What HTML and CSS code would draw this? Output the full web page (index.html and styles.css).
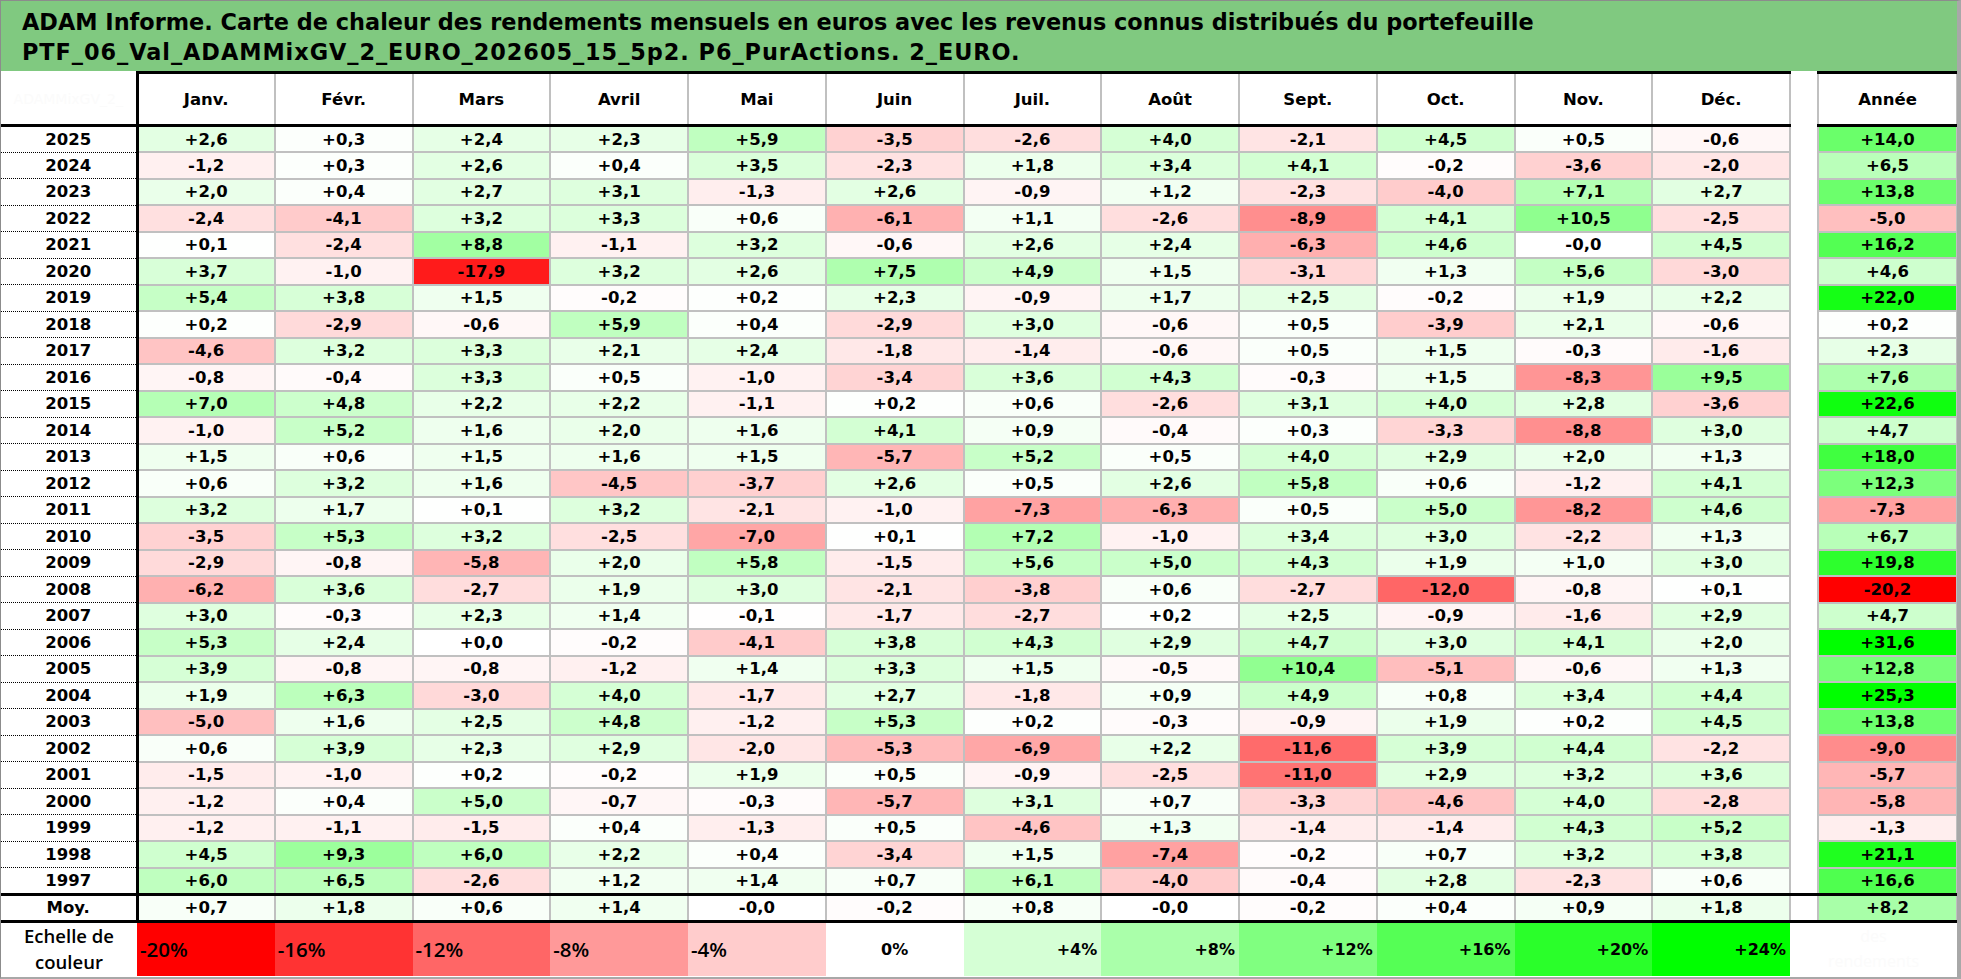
FILE: index.html
```html
<!DOCTYPE html>
<html lang="fr">
<head>
<meta charset="utf-8">
<title>ADAM Informe - Carte de chaleur</title>
<link rel="stylesheet" href="styles.css">
</head>
<body>
<div class="sheet">
  <div class="title">
    <p>ADAM Informe. Carte de chaleur des rendements mensuels en euros avec les revenus connus distribués du portefeuille</p>
    <p class="sub">PTF_06_Val_ADAMMixGV_2_EURO_202605_15_5p2. P6_PurActions. 2_EURO.</p>
  </div>
  <table class="heat">
    <colgroup>
      <col class="c-year">
      <col class="c-m"><col class="c-m"><col class="c-m"><col class="c-m"><col class="c-m"><col class="c-m">
      <col class="c-m"><col class="c-m"><col class="c-m"><col class="c-m"><col class="c-m"><col class="c-m">
      <col class="c-gap">
      <col class="c-an">
    </colgroup>
    <thead>
      <tr class="head">
        <th class="corner"><span class="ghost">ADAMMixGV_2_</span></th>
        <th class="m">Janv.</th><th class="m">Févr.</th><th class="m">Mars</th><th class="m">Avril</th>
        <th class="m">Mai</th><th class="m">Juin</th><th class="m">Juil.</th><th class="m">Août</th>
        <th class="m">Sept.</th><th class="m">Oct.</th><th class="m">Nov.</th><th class="m dec">Déc.</th>
        <th class="gap"></th>
        <th class="m an">Année</th>
      </tr>
    </thead>
    <tbody>
      <tr class="row"><th class="y">2025</th><td class="v">+2,6</td><td class="v">+0,3</td><td class="v">+2,4</td><td class="v">+2,3</td><td class="v">+5,9</td><td class="v">-3,5</td><td class="v">-2,6</td><td class="v">+4,0</td><td class="v">-2,1</td><td class="v">+4,5</td><td class="v">+0,5</td><td class="v dec">-0,6</td><td class="gap"></td><td class="v an">+14,0</td></tr>
      <tr class="row"><th class="y">2024</th><td class="v">-1,2</td><td class="v">+0,3</td><td class="v">+2,6</td><td class="v">+0,4</td><td class="v">+3,5</td><td class="v">-2,3</td><td class="v">+1,8</td><td class="v">+3,4</td><td class="v">+4,1</td><td class="v">-0,2</td><td class="v">-3,6</td><td class="v dec">-2,0</td><td class="gap"></td><td class="v an">+6,5</td></tr>
      <tr class="row"><th class="y">2023</th><td class="v">+2,0</td><td class="v">+0,4</td><td class="v">+2,7</td><td class="v">+3,1</td><td class="v">-1,3</td><td class="v">+2,6</td><td class="v">-0,9</td><td class="v">+1,2</td><td class="v">-2,3</td><td class="v">-4,0</td><td class="v">+7,1</td><td class="v dec">+2,7</td><td class="gap"></td><td class="v an">+13,8</td></tr>
      <tr class="row"><th class="y">2022</th><td class="v">-2,4</td><td class="v">-4,1</td><td class="v">+3,2</td><td class="v">+3,3</td><td class="v">+0,6</td><td class="v">-6,1</td><td class="v">+1,1</td><td class="v">-2,6</td><td class="v">-8,9</td><td class="v">+4,1</td><td class="v">+10,5</td><td class="v dec">-2,5</td><td class="gap"></td><td class="v an">-5,0</td></tr>
      <tr class="row"><th class="y">2021</th><td class="v">+0,1</td><td class="v">-2,4</td><td class="v">+8,8</td><td class="v">-1,1</td><td class="v">+3,2</td><td class="v">-0,6</td><td class="v">+2,6</td><td class="v">+2,4</td><td class="v">-6,3</td><td class="v">+4,6</td><td class="v">-0,0</td><td class="v dec">+4,5</td><td class="gap"></td><td class="v an">+16,2</td></tr>
      <tr class="row"><th class="y">2020</th><td class="v">+3,7</td><td class="v">-1,0</td><td class="v">-17,9</td><td class="v">+3,2</td><td class="v">+2,6</td><td class="v">+7,5</td><td class="v">+4,9</td><td class="v">+1,5</td><td class="v">-3,1</td><td class="v">+1,3</td><td class="v">+5,6</td><td class="v dec">-3,0</td><td class="gap"></td><td class="v an">+4,6</td></tr>
      <tr class="row"><th class="y">2019</th><td class="v">+5,4</td><td class="v">+3,8</td><td class="v">+1,5</td><td class="v">-0,2</td><td class="v">+0,2</td><td class="v">+2,3</td><td class="v">-0,9</td><td class="v">+1,7</td><td class="v">+2,5</td><td class="v">-0,2</td><td class="v">+1,9</td><td class="v dec">+2,2</td><td class="gap"></td><td class="v an">+22,0</td></tr>
      <tr class="row"><th class="y">2018</th><td class="v">+0,2</td><td class="v">-2,9</td><td class="v">-0,6</td><td class="v">+5,9</td><td class="v">+0,4</td><td class="v">-2,9</td><td class="v">+3,0</td><td class="v">-0,6</td><td class="v">+0,5</td><td class="v">-3,9</td><td class="v">+2,1</td><td class="v dec">-0,6</td><td class="gap"></td><td class="v an">+0,2</td></tr>
      <tr class="row"><th class="y">2017</th><td class="v">-4,6</td><td class="v">+3,2</td><td class="v">+3,3</td><td class="v">+2,1</td><td class="v">+2,4</td><td class="v">-1,8</td><td class="v">-1,4</td><td class="v">-0,6</td><td class="v">+0,5</td><td class="v">+1,5</td><td class="v">-0,3</td><td class="v dec">-1,6</td><td class="gap"></td><td class="v an">+2,3</td></tr>
      <tr class="row"><th class="y">2016</th><td class="v">-0,8</td><td class="v">-0,4</td><td class="v">+3,3</td><td class="v">+0,5</td><td class="v">-1,0</td><td class="v">-3,4</td><td class="v">+3,6</td><td class="v">+4,3</td><td class="v">-0,3</td><td class="v">+1,5</td><td class="v">-8,3</td><td class="v dec">+9,5</td><td class="gap"></td><td class="v an">+7,6</td></tr>
      <tr class="row"><th class="y">2015</th><td class="v">+7,0</td><td class="v">+4,8</td><td class="v">+2,2</td><td class="v">+2,2</td><td class="v">-1,1</td><td class="v">+0,2</td><td class="v">+0,6</td><td class="v">-2,6</td><td class="v">+3,1</td><td class="v">+4,0</td><td class="v">+2,8</td><td class="v dec">-3,6</td><td class="gap"></td><td class="v an">+22,6</td></tr>
      <tr class="row"><th class="y">2014</th><td class="v">-1,0</td><td class="v">+5,2</td><td class="v">+1,6</td><td class="v">+2,0</td><td class="v">+1,6</td><td class="v">+4,1</td><td class="v">+0,9</td><td class="v">-0,4</td><td class="v">+0,3</td><td class="v">-3,3</td><td class="v">-8,8</td><td class="v dec">+3,0</td><td class="gap"></td><td class="v an">+4,7</td></tr>
      <tr class="row"><th class="y">2013</th><td class="v">+1,5</td><td class="v">+0,6</td><td class="v">+1,5</td><td class="v">+1,6</td><td class="v">+1,5</td><td class="v">-5,7</td><td class="v">+5,2</td><td class="v">+0,5</td><td class="v">+4,0</td><td class="v">+2,9</td><td class="v">+2,0</td><td class="v dec">+1,3</td><td class="gap"></td><td class="v an">+18,0</td></tr>
      <tr class="row"><th class="y">2012</th><td class="v">+0,6</td><td class="v">+3,2</td><td class="v">+1,6</td><td class="v">-4,5</td><td class="v">-3,7</td><td class="v">+2,6</td><td class="v">+0,5</td><td class="v">+2,6</td><td class="v">+5,8</td><td class="v">+0,6</td><td class="v">-1,2</td><td class="v dec">+4,1</td><td class="gap"></td><td class="v an">+12,3</td></tr>
      <tr class="row"><th class="y">2011</th><td class="v">+3,2</td><td class="v">+1,7</td><td class="v">+0,1</td><td class="v">+3,2</td><td class="v">-2,1</td><td class="v">-1,0</td><td class="v">-7,3</td><td class="v">-6,3</td><td class="v">+0,5</td><td class="v">+5,0</td><td class="v">-8,2</td><td class="v dec">+4,6</td><td class="gap"></td><td class="v an">-7,3</td></tr>
      <tr class="row"><th class="y">2010</th><td class="v">-3,5</td><td class="v">+5,3</td><td class="v">+3,2</td><td class="v">-2,5</td><td class="v">-7,0</td><td class="v">+0,1</td><td class="v">+7,2</td><td class="v">-1,0</td><td class="v">+3,4</td><td class="v">+3,0</td><td class="v">-2,2</td><td class="v dec">+1,3</td><td class="gap"></td><td class="v an">+6,7</td></tr>
      <tr class="row"><th class="y">2009</th><td class="v">-2,9</td><td class="v">-0,8</td><td class="v">-5,8</td><td class="v">+2,0</td><td class="v">+5,8</td><td class="v">-1,5</td><td class="v">+5,6</td><td class="v">+5,0</td><td class="v">+4,3</td><td class="v">+1,9</td><td class="v">+1,0</td><td class="v dec">+3,0</td><td class="gap"></td><td class="v an">+19,8</td></tr>
      <tr class="row"><th class="y">2008</th><td class="v">-6,2</td><td class="v">+3,6</td><td class="v">-2,7</td><td class="v">+1,9</td><td class="v">+3,0</td><td class="v">-2,1</td><td class="v">-3,8</td><td class="v">+0,6</td><td class="v">-2,7</td><td class="v">-12,0</td><td class="v">-0,8</td><td class="v dec">+0,1</td><td class="gap"></td><td class="v an">-20,2</td></tr>
      <tr class="row"><th class="y">2007</th><td class="v">+3,0</td><td class="v">-0,3</td><td class="v">+2,3</td><td class="v">+1,4</td><td class="v">-0,1</td><td class="v">-1,7</td><td class="v">-2,7</td><td class="v">+0,2</td><td class="v">+2,5</td><td class="v">-0,9</td><td class="v">-1,6</td><td class="v dec">+2,9</td><td class="gap"></td><td class="v an">+4,7</td></tr>
      <tr class="row"><th class="y">2006</th><td class="v">+5,3</td><td class="v">+2,4</td><td class="v">+0,0</td><td class="v">-0,2</td><td class="v">-4,1</td><td class="v">+3,8</td><td class="v">+4,3</td><td class="v">+2,9</td><td class="v">+4,7</td><td class="v">+3,0</td><td class="v">+4,1</td><td class="v dec">+2,0</td><td class="gap"></td><td class="v an">+31,6</td></tr>
      <tr class="row"><th class="y">2005</th><td class="v">+3,9</td><td class="v">-0,8</td><td class="v">-0,8</td><td class="v">-1,2</td><td class="v">+1,4</td><td class="v">+3,3</td><td class="v">+1,5</td><td class="v">-0,5</td><td class="v">+10,4</td><td class="v">-5,1</td><td class="v">-0,6</td><td class="v dec">+1,3</td><td class="gap"></td><td class="v an">+12,8</td></tr>
      <tr class="row"><th class="y">2004</th><td class="v">+1,9</td><td class="v">+6,3</td><td class="v">-3,0</td><td class="v">+4,0</td><td class="v">-1,7</td><td class="v">+2,7</td><td class="v">-1,8</td><td class="v">+0,9</td><td class="v">+4,9</td><td class="v">+0,8</td><td class="v">+3,4</td><td class="v dec">+4,4</td><td class="gap"></td><td class="v an">+25,3</td></tr>
      <tr class="row"><th class="y">2003</th><td class="v">-5,0</td><td class="v">+1,6</td><td class="v">+2,5</td><td class="v">+4,8</td><td class="v">-1,2</td><td class="v">+5,3</td><td class="v">+0,2</td><td class="v">-0,3</td><td class="v">-0,9</td><td class="v">+1,9</td><td class="v">+0,2</td><td class="v dec">+4,5</td><td class="gap"></td><td class="v an">+13,8</td></tr>
      <tr class="row"><th class="y">2002</th><td class="v">+0,6</td><td class="v">+3,9</td><td class="v">+2,3</td><td class="v">+2,9</td><td class="v">-2,0</td><td class="v">-5,3</td><td class="v">-6,9</td><td class="v">+2,2</td><td class="v">-11,6</td><td class="v">+3,9</td><td class="v">+4,4</td><td class="v dec">-2,2</td><td class="gap"></td><td class="v an">-9,0</td></tr>
      <tr class="row"><th class="y">2001</th><td class="v">-1,5</td><td class="v">-1,0</td><td class="v">+0,2</td><td class="v">-0,2</td><td class="v">+1,9</td><td class="v">+0,5</td><td class="v">-0,9</td><td class="v">-2,5</td><td class="v">-11,0</td><td class="v">+2,9</td><td class="v">+3,2</td><td class="v dec">+3,6</td><td class="gap"></td><td class="v an">-5,7</td></tr>
      <tr class="row"><th class="y">2000</th><td class="v">-1,2</td><td class="v">+0,4</td><td class="v">+5,0</td><td class="v">-0,7</td><td class="v">-0,3</td><td class="v">-5,7</td><td class="v">+3,1</td><td class="v">+0,7</td><td class="v">-3,3</td><td class="v">-4,6</td><td class="v">+4,0</td><td class="v dec">-2,8</td><td class="gap"></td><td class="v an">-5,8</td></tr>
      <tr class="row"><th class="y">1999</th><td class="v">-1,2</td><td class="v">-1,1</td><td class="v">-1,5</td><td class="v">+0,4</td><td class="v">-1,3</td><td class="v">+0,5</td><td class="v">-4,6</td><td class="v">+1,3</td><td class="v">-1,4</td><td class="v">-1,4</td><td class="v">+4,3</td><td class="v dec">+5,2</td><td class="gap"></td><td class="v an">-1,3</td></tr>
      <tr class="row"><th class="y">1998</th><td class="v">+4,5</td><td class="v">+9,3</td><td class="v">+6,0</td><td class="v">+2,2</td><td class="v">+0,4</td><td class="v">-3,4</td><td class="v">+1,5</td><td class="v">-7,4</td><td class="v">-0,2</td><td class="v">+0,7</td><td class="v">+3,2</td><td class="v dec">+3,8</td><td class="gap"></td><td class="v an">+21,1</td></tr>
      <tr class="row"><th class="y">1997</th><td class="v">+6,0</td><td class="v">+6,5</td><td class="v">-2,6</td><td class="v">+1,2</td><td class="v">+1,4</td><td class="v">+0,7</td><td class="v">+6,1</td><td class="v">-4,0</td><td class="v">-0,4</td><td class="v">+2,8</td><td class="v">-2,3</td><td class="v dec">+0,6</td><td class="gap"></td><td class="v an">+16,6</td></tr>
      <tr class="moy"><th class="y">Moy.</th><td class="v">+0,7</td><td class="v">+1,8</td><td class="v">+0,6</td><td class="v">+1,4</td><td class="v">-0,0</td><td class="v">-0,2</td><td class="v">+0,8</td><td class="v">-0,0</td><td class="v">-0,2</td><td class="v">+0,4</td><td class="v">+0,9</td><td class="v dec">+1,8</td><td class="gap"></td><td class="v an">+8,2</td></tr>
      <tr class="legend">
        <th class="lab">Echelle de<br>couleur</th>
        <td class="sw neg">-20%</td><td class="sw neg">-16%</td><td class="sw neg">-12%</td><td class="sw neg">-8%</td><td class="sw neg">-4%</td>
        <td class="sw zero">0%</td>
        <td class="sw pos">+4%</td><td class="sw pos">+8%</td><td class="sw pos">+12%</td><td class="sw pos">+16%</td><td class="sw pos">+20%</td><td class="sw pos">+24%</td>
        <td class="tail" colspan="2"><span class="ghost2">des<br>rendements</span></td>
      </tr>
    </tbody>
  </table>
</div>
<script src="script.js"></script>
</body>
</html>
```

FILE: styles.css
```css
* { box-sizing: border-box; }
html, body { margin: 0; padding: 0; background: #ffffff; }

.sheet {
  width: 1961px;
  height: 979px;
  border: 1px solid #8c8c8c;
  border-right: 4px solid #a8a8a8;
  border-bottom: 2px solid #a8a8a8;
  overflow: hidden;
  background: #ffffff;
}

.title {
  height: 70px;
  background: #80c980;
  padding: 6px 0 0 21px;
  font-family: "DejaVu Sans", Verdana, sans-serif;
  font-weight: bold;
  font-size: 22.4px;
  line-height: 30px;
  color: #000;
  white-space: nowrap;
}
.title p { margin: 0; }
.title .sub { letter-spacing: 0.95px; }

table.heat {
  border-collapse: collapse;
  table-layout: fixed;
  width: 1956px;
  font-family: "DejaVu Sans", Verdana, sans-serif;
  font-weight: bold;
  font-size: 16.5px;
  color: #000;
}
.c-year { width: 136px; }
.c-m { width: 137.75px; }
.c-gap { width: 28px; }
.c-an { width: 139px; }

table.heat th, table.heat td {
  padding: 0;
  text-align: center;
  vertical-align: middle;
  white-space: nowrap;
  overflow: hidden;
  font-weight: bold;
}

tr.head { height: 53px; }
tr.row { height: 26.5px; }
tr.moy { height: 27px; }
tr.legend { height: 55px; }

/* header */
table.heat th.corner {
  border-top: none;
  border-bottom: 3px solid #000;
  border-right: 3px solid #000;
}
.ghost {
  font-family: "DejaVu Sans", Verdana, sans-serif;
  font-weight: normal;
  font-size: 14px;
  color: #fbfbfb;
}
table.heat th.m {
  border-top: 3px solid #000;
  border-bottom: 3px solid #000;
  border-left: 2px solid #c0c0c0;
  border-right: 2px solid #c0c0c0;
  background: #fff;
}

/* year column */
table.heat th.y {
  background: #fff;
  border-top: 1px dotted #000;
  border-bottom: 1px dotted #000;
  border-right: 3px solid #000;
  border-left: none;
}

/* value cells */
table.heat td.v {
  border: 2px solid #c0c0c0;
  background: #fff;
}
table.heat .dec { border-right: 3px solid #000; }
table.heat .an {
  border-left: 3px solid #000;
  border-right: 3px solid #000;
}
table.heat .gap { border: none; background: #fff; }

/* average row */
table.heat tr.moy th, table.heat tr.moy td {
  border-top: 3px solid #000;
  border-bottom: 3px solid #000;
}

/* legend */
table.heat tr.legend th, table.heat tr.legend td { border: none; }
table.heat th.lab {
  font-family: "Open Sans", "Liberation Sans", sans-serif;
  font-weight: 600;
  font-size: 18.5px;
  line-height: 26px;
}
table.heat td.sw {
  border-left: 1px solid rgba(255, 255, 255, 0.45);
  border-right: 1px solid rgba(255, 255, 255, 0.45);
}
table.heat td.neg {
  text-align: left;
  padding-left: 3px;
  font-family: "Open Sans", "Liberation Sans", sans-serif;
  font-weight: 600;
  font-size: 20.5px;
}
table.heat td.zero { text-align: center; font-size: 16px; }
table.heat td.pos { text-align: right; padding-right: 4px; font-size: 16px; }
table.heat td.tail { background: #fff; }
.ghost2 {
  display: block;
  font-family: "Open Sans", "Liberation Sans", sans-serif;
  font-weight: normal;
  font-size: 16px;
  line-height: 25px;
  color: #fbfbfb;
  text-align: center;
}
```

FILE: script.js
```js
function heatColor(v) {
  var c;
  if (v < 0) {
    c = Math.max(0, Math.round(255 * (1 + v / 20)));
    return "rgb(255," + c + "," + c + ")";
  }
  c = Math.max(0, Math.round(255 * (1 - v / 24)));
  return "rgb(" + c + ",255," + c + ")";
}
document.querySelectorAll("td.v, td.sw").forEach(function (td) {
  var v = parseFloat(td.textContent.replace(",", "."));
  if (!isNaN(v)) td.style.background = heatColor(v);
});
```
